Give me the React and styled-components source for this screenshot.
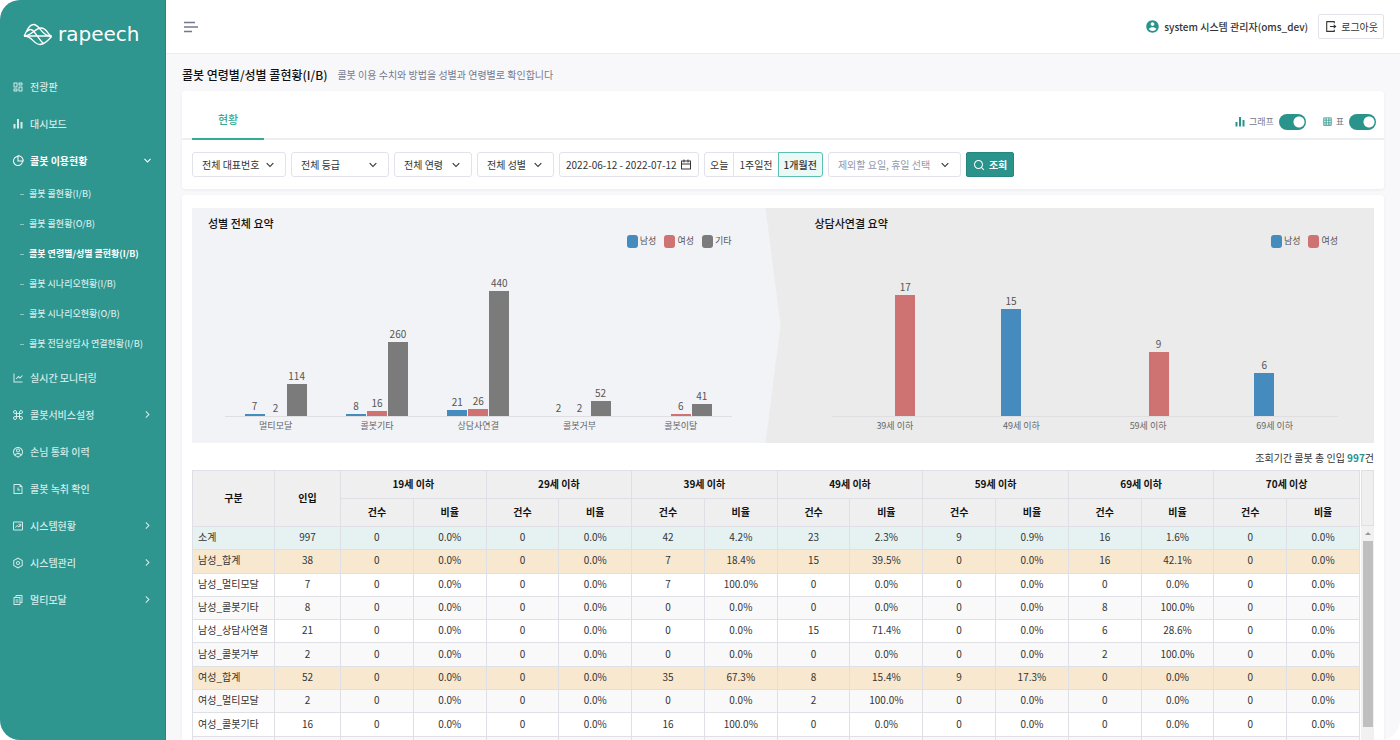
import { useState } from 'react';
import styled, { createGlobalStyle } from 'styled-components';
import {
  RiAccountCircleFill,
  RiAccountPinCircleLine,
  RiArrowDownSLine,
  RiArrowRightSLine,
  RiBarChartFill,
  RiCalendarLine,
  RiDashboardLine,
  RiFileCopy2Line,
  RiFileHistoryLine,
  RiGridLine,
  RiLineChartLine,
  RiLogoutBoxRLine,
  RiPieChart2Line,
  RiSearchLine,
  RiSettingsLine,
} from 'react-icons/ri';
import { LuCommand } from 'react-icons/lu';

const BLUE = '#468bbe';
const RED = '#cf7272';
const GRAY = '#7b7b7b';

const TrendBoxIcon = ({ size }) => (
  <svg width={size} height={size} viewBox="0 0 24 24" fill="none" stroke="currentColor" strokeWidth="2">
    <path d="M3 4h18v16H3ZM7 15l3-4 4 3 3-5M13 8.500h4.500V13" />
  </svg>
);

const subMenus = [
  { name: '콜봇 콜현황(I/B)' },
  { name: '콜봇 콜현황(O/B)' },
  { name: '콜봇 연령별/성별 콜현황(I/B)', active: true },
  { name: '콜봇 시나리오현황(I/B)' },
  { name: '콜봇 시나리오현황(O/B)' },
  { name: '콜봇 전담상담사 연결현황(I/B)' },
];

const menus = [
  { name: '전광판', Icon: RiDashboardLine },
  { name: '대시보드', Icon: RiBarChartFill },
  { name: '콜봇 이용현황', Icon: RiPieChart2Line, children: subMenus, active: true },
  { name: '실시간 모니터링', Icon: RiLineChartLine },
  { name: '콜봇서비스설정', Icon: LuCommand, more: true },
  { name: '손님 통화 이력', Icon: RiAccountPinCircleLine },
  { name: '콜봇 녹취 확인', Icon: RiFileHistoryLine },
  { name: '시스템현황', Icon: TrendBoxIcon, more: true },
  { name: '시스템관리', Icon: RiSettingsLine, more: true },
  { name: '멀티모달', Icon: RiFileCopy2Line, more: true },
];

const filters = [
  { label: '전체 대표번호', width: 94 },
  { label: '전체 등급', width: 98 },
  { label: '전체 연령', width: 78 },
  { label: '전체 성별', width: 77 },
];

const periods = ['오늘', '1주일전', '1개월전'];

const genderLegend = [
  { name: '남성', color: BLUE },
  { name: '여성', color: RED },
  { name: '기타', color: GRAY },
];

const genderChart = [
  { name: '멀티모달', values: [7, 2, 114] },
  { name: '콜봇기타', values: [8, 16, 260] },
  { name: '상담사연결', values: [21, 26, 440] },
  { name: '콜봇거부', values: [2, 2, 52] },
  { name: '콜봇이탈', values: [null, 6, 41] },
];

const agentChart = [
  { name: '39세 이하', values: [null, 17] },
  { name: '49세 이하', values: [15, null] },
  { name: '59세 이하', values: [null, 9] },
  { name: '69세 이하', values: [6, null] },
];

const ages = ['19세 이하', '29세 이하', '39세 이하', '49세 이하', '59세 이하', '69세 이하', '70세 이상'];

// cells: index of age group -> [count, ratio]
const rows = [
  { name: '소계', total: 997, kind: 'sum', cells: { 2: [42, '4.2%'], 3: [23, '2.3%'], 4: [9, '0.9%'], 5: [16, '1.6%'] } },
  { name: '남성_합계', total: 38, kind: 'group', cells: { 2: [7, '18.4%'], 3: [15, '39.5%'], 5: [16, '42.1%'] } },
  { name: '남성_멀티모달', total: 7, cells: { 2: [7, '100.0%'] } },
  { name: '남성_콜봇기타', total: 8, cells: { 5: [8, '100.0%'] } },
  { name: '남성_상담사연결', total: 21, cells: { 3: [15, '71.4%'], 5: [6, '28.6%'] } },
  { name: '남성_콜봇거부', total: 2, cells: { 5: [2, '100.0%'] } },
  { name: '여성_합계', total: 52, kind: 'group', cells: { 2: [35, '67.3%'], 3: [8, '15.4%'], 4: [9, '17.3%'] } },
  { name: '여성_멀티모달', total: 2, cells: { 3: [2, '100.0%'] } },
  { name: '여성_콜봇기타', total: 16, cells: { 2: [16, '100.0%'] } },
];

const BarChart = ({ title, legend, data, scale }) => (
  <>
    <ChartTitle>{title}</ChartTitle>
    <Legend>
      {legend.map(({ name, color }) => (
        <LegendItem key={name}>
          <Swatch color={color} />
          {name}
        </LegendItem>
      ))}
    </Legend>
    <Plot>
      {data.map(({ name, values }) => (
        <Group key={name}>
          {values.map((value, i) => (
            <BarSlot key={legend[i].name}>
              {value}
              <Bar color={legend[i].color} style={{ height: value * scale < 1 ? 0 : Math.round(value * scale) }} />
            </BarSlot>
          ))}
        </Group>
      ))}
    </Plot>
    <AxisLabels>
      {data.map(({ name }) => (
        <AxisLabel key={name}>{name}</AxisLabel>
      ))}
    </AxisLabels>
  </>
);

const Logo = () => (
  <LogoLink href="#home">
    <svg width="30" height="23" viewBox="0 0 30 23" fill="none" stroke="#fff" strokeWidth="1.3">
      <path d="M1 13C4 9 5 1.500 10.500 1.500 17 1.500 18 13 28.500 13.500" />
      <path d="M1 13c9 0 9 8.500 16 8.500 5 0 8-4 11.500-8" />
      <path d="M1 13C9 13 12 5 18 5c6 0 6 6 10.500 8.500" />
      <path d="M1 13h27.500M4 8.500C10 1 14 16 21 21" />
    </svg>
    <LogoText>rapeech</LogoText>
  </LogoLink>
);

const Sidebar = () => (
  <Side>
    <Logo />
    <Menu>
      {menus.map(({ name, Icon, active, more, children }) => (
        <li key={name}>
          <MenuLink href="#menu" $active={active}>
            <Icon size={12} />
            <MenuName>{name}</MenuName>
            {children && <RiArrowDownSLine size={13} />}
            {more && <RiArrowRightSLine size={13} />}
          </MenuLink>
          {children && (
            <SubMenu>
              {children.map(sub => (
                <li key={sub.name}>
                  <SubLink href="#menu" $active={sub.active}>
                    {sub.name}
                  </SubLink>
                </li>
              ))}
            </SubMenu>
          )}
        </li>
      ))}
    </Menu>
  </Side>
);

const Toggle = ({ icon, label, checked, onChange }) => (
  <ToggleLabel>
    {icon}
    {label}
    <Switch type="checkbox" role="switch" checked={checked} onChange={onChange} />
  </ToggleLabel>
);

const StatTable = () => (
  <TableArea>
    <TableBox>
      <Table>
        <colgroup>
          <NameCol />
          <TotalCol />
          {ages.map(age => (
            <col key={age} span={2} />
          ))}
        </colgroup>
        <thead>
          <tr>
            <Th rowSpan={2}>구분</Th>
            <Th rowSpan={2}>인입</Th>
            {ages.map(age => (
              <Th key={age} colSpan={2}>
                {age}
              </Th>
            ))}
          </tr>
          <tr>{ages.map(age => [<Th key={`${age}-count`}>건수</Th>, <Th key={`${age}-ratio`}>비율</Th>])}</tr>
        </thead>
        <tbody>
          {rows.map(({ name, total, kind, cells }) => (
            <Row key={name} $kind={kind}>
              <Td $left>{name}</Td>
              <Td>{total}</Td>
              {ages.map((age, i) => {
                const [count, ratio] = cells[i] || [0, '0.0%'];
                return [<Td key={`${age}-count`}>{count}</Td>, <Td key={`${age}-ratio`}>{ratio}</Td>];
              })}
            </Row>
          ))}
          <Row>
            <Td />
            <Td />
            {ages.map(age => [<Td key={`${age}-count`} />, <Td key={`${age}-ratio`} />])}
          </Row>
        </tbody>
      </Table>
    </TableBox>
    <ScrollColumn aria-hidden="true">
      <ScrollHead />
      <ScrollArrow />
      <ScrollThumb />
    </ScrollColumn>
  </TableArea>
);

const App = () => {
  const [period, setPeriod] = useState('1개월전');
  const [showGraph, setShowGraph] = useState(true);
  const [showTable, setShowTable] = useState(true);

  return (
    <>
      <GlobalStyle />
      <Shell>
        <Sidebar />
        <Main>
          <Header>
            <IconButton aria-label="메뉴">
              <svg width="14" height="12" viewBox="0 0 14 12" stroke="#74788d" strokeWidth="1.500">
                <path d="M0 1.500h11M0 6h14M0 10.500h8" />
              </svg>
            </IconButton>
            <User>
              <RiAccountCircleFill size={15} color="#2a938c" />
              system 시스템 관리자(oms_dev)
            </User>
            <LogoutButton>
              <RiLogoutBoxRLine size={13} />
              로그아웃
            </LogoutButton>
          </Header>
          <Content>
            <TitleRow>
              <PageTitle>콜봇 연령별/성별 콜현황(I/B)</PageTitle>
              <PageDesc>콜봇 이용 수치와 방법을 성별과 연령별로 확인합니다</PageDesc>
            </TitleRow>
            <Card>
              <TabBar>
                <Tab>현황</Tab>
                <Toggles>
                  <Toggle
                    icon={<RiBarChartFill size={12} color="#2a938c" />}
                    label="그래프"
                    checked={showGraph}
                    onChange={() => setShowGraph(!showGraph)}
                  />
                  <Toggle
                    icon={<RiGridLine size={11} color="#2a938c" />}
                    label="표"
                    checked={showTable}
                    onChange={() => setShowTable(!showTable)}
                  />
                </Toggles>
              </TabBar>
              <FilterBar>
                {filters.map(({ label, width }) => (
                  <SelectBox key={label} $width={width}>
                    <Select aria-label={label}>
                      <option>{label}</option>
                    </Select>
                    <RiArrowDownSLine size={14} />
                  </SelectBox>
                ))}
                <DateBox>
                  <DateInput aria-label="조회기간" defaultValue="2022-06-12 - 2022-07-12" />
                  <RiCalendarLine size={12} />
                </DateBox>
                <Periods>
                  {periods.map(name => (
                    <PeriodButton key={name} $active={name === period} onClick={() => setPeriod(name)}>
                      {name}
                    </PeriodButton>
                  ))}
                </Periods>
                <SelectBox $width={133} $muted>
                  <Select aria-label="제외할 요일, 휴일 선택">
                    <option>제외할 요일, 휴일 선택</option>
                  </Select>
                  <RiArrowDownSLine size={14} />
                </SelectBox>
                <SearchButton>
                  <RiSearchLine size={12} />
                  조회
                </SearchButton>
              </FilterBar>
            </Card>
            <ReportCard>
              {showGraph && (
                <Charts>
                  <GenderPanel>
                    <BarChart title="성별 전체 요약" legend={genderLegend} data={genderChart} scale={0.285} />
                  </GenderPanel>
                  <AgentPanel>
                    <BarChart
                      title="상담사연결 요약"
                      legend={genderLegend.slice(0, 2)}
                      data={agentChart}
                      scale={7.12}
                    />
                  </AgentPanel>
                </Charts>
              )}
              <Total>
                조회기간 콜봇 총 인입 <strong>997</strong>건
              </Total>
              {showTable && <StatTable />}
            </ReportCard>
          </Content>
        </Main>
      </Shell>
    </>
  );
};

const GlobalStyle = createGlobalStyle`
  * {
    box-sizing: border-box;
  }
  body {
    margin: 0;
    background: #fff;
    color: #343434;
    font-family: 'Noto Sans CJK KR', 'Noto Sans', sans-serif;
    font-size: 10px;
    line-height: 16px;
  }
  button, input, select {
    font: inherit;
    color: inherit;
  }
  ul {
    margin: 0;
    padding: 0;
    list-style: none;
  }
  a {
    color: inherit;
    text-decoration: none;
  }
  svg {
    flex: none;
  }
`;

const Shell = styled.div`
  display: flex;
  height: 100vh;
  overflow: hidden;
  border-radius: 20px;
  background: #f8f8fb;
`;

const Side = styled.aside`
  flex: none;
  width: 166px;
  background: #2e958f;
  border-right: 1px solid #23877f;
  color: #d3ebe9;
`;

const LogoLink = styled.a`
  display: flex;
  align-items: center;
  gap: 5px;
  height: 68px;
  padding-left: 23px;
  color: #fff;
`;

const LogoText = styled.span`
  font: 400 20px/24px 'DejaVu Sans', sans-serif;
`;

const Menu = styled.ul`
  font-size: 10px;
`;

const MenuLink = styled.a`
  display: flex;
  align-items: center;
  gap: 6px;
  height: 37px;
  padding: 0 11px 0 12px;
  color: ${({ $active }) => ($active ? '#fff' : 'inherit')};
  font-weight: ${({ $active }) => ($active ? 700 : 500)};
`;

const MenuName = styled.span`
  flex: 1;
`;

const SubMenu = styled.ul`
  font-size: 9px;
`;

const SubLink = styled.a`
  display: flex;
  align-items: center;
  gap: 5px;
  height: 30px;
  padding-left: 20px;
  white-space: nowrap;
  color: ${({ $active }) => ($active ? '#fff' : 'inherit')};
  font-weight: ${({ $active }) => ($active ? 700 : 500)};
  &::before {
    content: '';
    width: 4px;
    height: 1px;
    background: #8cc5c1;
  }
`;

const Main = styled.div`
  flex: 1;
  min-width: 0;
`;

const Header = styled.header`
  display: flex;
  align-items: center;
  height: 54px;
  padding: 0 16px 0 18px;
  background: #fff;
  border-bottom: 1px solid #ececee;
`;

const IconButton = styled.button`
  display: flex;
  padding: 0;
  border: 0;
  background: none;
`;

const User = styled.div`
  display: flex;
  align-items: center;
  gap: 4px;
  margin-left: auto;
  font-weight: 500;
`;

const LogoutButton = styled.button`
  display: flex;
  align-items: center;
  gap: 4px;
  height: 25px;
  margin-left: 10px;
  padding: 0 5px;
  border: 1px solid #e2e3ea;
  border-radius: 2px;
  background: #fff;
`;

const Content = styled.main`
  padding: 0 16px;
`;

const TitleRow = styled.div`
  display: flex;
  align-items: center;
  gap: 10px;
  height: 37px;
  padding-top: 4px;
`;

const PageTitle = styled.h1`
  margin: 0;
  font-size: 12px;
  font-weight: 500;
  color: #111;
`;

const PageDesc = styled.p`
  margin: 0;
  color: #74788d;
`;

const Card = styled.section`
  background: #fff;
  border-radius: 3px;
  box-shadow: 0 1px 3px rgba(18, 38, 63, 0.06);
`;

const TabBar = styled.div`
  display: flex;
  justify-content: space-between;
  height: 49px;
  padding: 0 8px 0 10px;
  box-shadow: inset 0 -2px #eeeef0;
`;

const Tab = styled.button`
  width: 72px;
  padding: 8px 0 0;
  border: 0;
  border-bottom: 2px solid #34ab95;
  background: none;
  color: #34ab95;
  font-size: 11px;
  font-weight: 500;
`;

const Toggles = styled.div`
  display: flex;
  align-items: center;
  gap: 16px;
  padding-top: 12px;
`;

const ToggleLabel = styled.label`
  display: flex;
  align-items: center;
  gap: 3px;
  font-size: 9px;
  color: #74788d;
`;

const Switch = styled.input`
  appearance: none;
  width: 27px;
  height: 16px;
  margin: 0 0 0 2px;
  border-radius: 8px;
  background: ${({ checked }) =>
    checked
      ? 'radial-gradient(circle at 20px 8px, #fff 5px, #2a938c 6px)'
      : 'radial-gradient(circle at 8px 8px, #fff 5px, #b5b7c0 6px)'};
`;

const FilterBar = styled.div`
  display: flex;
  gap: 5px;
  padding: 12px 10px;
`;

const SelectBox = styled.div`
  display: flex;
  align-items: center;
  width: ${({ $width }) => $width}px;
  height: 25px;
  padding-right: 8px;
  border: 1px solid #e2e3ea;
  border-radius: 3px;
  svg {
    margin-left: -14px;
    pointer-events: none;
  }
  select {
    color: ${({ $muted }) => ($muted ? '#9497ab' : 'inherit')};
  }
`;

const Select = styled.select`
  appearance: none;
  flex: 1;
  min-width: 0;
  height: 100%;
  padding: 0 0 0 9px;
  border: 0;
  background: none;
`;

const DateBox = styled.div`
  display: flex;
  align-items: center;
  gap: 2px;
  width: 140px;
  height: 25px;
  padding: 0 6px;
  border: 1px solid #e2e3ea;
  border-radius: 3px;
`;

const DateInput = styled.input`
  flex: 1;
  min-width: 0;
  padding: 0;
  border: 0;
  background: none;
`;

const Periods = styled.div`
  display: flex;
`;

const PeriodButton = styled.button`
  height: 25px;
  padding: 0 5px;
  border: 1px solid ${({ $active }) => ($active ? '#5bc0b0' : '#e2e3ea')};
  background: ${({ $active }) => ($active ? '#eaf8f6' : '#fff')};
  font-weight: ${({ $active }) => ($active ? 500 : 400)};
  & + & {
    margin-left: -1px;
  }
  &:first-child {
    border-radius: 3px 0 0 3px;
  }
  &:last-child {
    border-radius: 0 3px 3px 0;
  }
`;

const SearchButton = styled.button`
  display: flex;
  align-items: center;
  gap: 4px;
  height: 25px;
  padding: 0 6px;
  border: 1px solid #23877f;
  border-radius: 2px;
  background: #2a938c;
  color: #fff;
  font-weight: 700;
`;

const ReportCard = styled(Card)`
  margin-top: 6px;
  padding: 13px 10px;
`;

const Charts = styled.div`
  display: flex;
  background: #ebebeb;
`;

const ChartPanel = styled.section`
  flex: 1;
  min-width: 0;
  height: 235px;
`;

const GenderPanel = styled(ChartPanel)`
  padding: 7px 51px 0 33px;
  background: #f2f3f6;
  clip-path: polygon(0 0, calc(100% - 17px) 0, calc(100% - 2px) 50%, calc(100% - 17px) 100%, 0 100%);
`;

const AgentPanel = styled(ChartPanel)`
  padding: 7px 36px 0 49px;
`;

const ChartTitle = styled.h2`
  margin: 0 0 0 -17px;
  font-size: 11px;
  font-weight: 500;
  line-height: 16px;
  color: #111;
`;

const Legend = styled.div`
  display: flex;
  justify-content: flex-end;
  gap: 8px;
  margin-top: 2px;
  font-size: 9px;
  color: #555;
`;

const LegendItem = styled.span`
  display: flex;
  align-items: center;
  gap: 2px;
`;

const Swatch = styled.i`
  width: 11px;
  height: 13px;
  border-radius: 3px;
  background: ${({ color }) => color};
`;

const Plot = styled.div`
  display: flex;
  height: 168px;
  border-bottom: 1px solid #dfdfe1;
`;

const Group = styled.div`
  flex: 1;
  display: flex;
  justify-content: center;
  align-items: flex-end;
  gap: 1px;
`;

const BarSlot = styled.div`
  width: 20px;
  text-align: center;
  color: #555;
`;

const Bar = styled.div`
  background: ${({ color }) => color};
`;

const AxisLabels = styled.div`
  display: flex;
  padding-top: 1px;
`;

const AxisLabel = styled.span`
  flex: 1;
  text-align: center;
  font-size: 9px;
  color: #666;
`;

const Total = styled.p`
  margin: 0;
  padding: 7px 0 4px;
  text-align: right;
  strong {
    color: #2a938c;
    font-weight: 700;
  }
`;

const TableArea = styled.div`
  display: flex;
  gap: 1px;
`;

const TableBox = styled.div`
  flex: 1;
  min-width: 0;
`;

const Table = styled.table`
  width: 100%;
  height: 290px;
  table-layout: fixed;
  border-collapse: collapse;
`;

const NameCol = styled.col`
  width: 82px;
`;

const TotalCol = styled.col`
  width: 66px;
`;

const Th = styled.th`
  height: 28px;
  padding: 0 0 1px;
  border: 1px solid #dfdfe6;
  background: #efefef;
  color: #111;
  font-weight: 700;
`;

const rowColor = {
  sum: '#e5f2f1',
  group: '#f7e8cf',
};

const Row = styled.tr`
  background: ${({ $kind }) => rowColor[$kind] || '#fff'};
  &:nth-child(even) {
    background: ${({ $kind }) => rowColor[$kind] || '#f9f9f9'};
  }
`;

// the cell's own padding keeps an empty row as tall as a filled one
const Td = styled.td`
  padding: 0 5px 2px;
  border: 1px solid #dfdfe6;
  text-align: ${({ $left }) => ($left ? 'left' : 'center')};
  white-space: nowrap;
  &:empty {
    padding: 8px 5px 10px;
  }
`;

const ScrollColumn = styled.div`
  display: flex;
  flex-direction: column;
  align-items: center;
  width: 13px;
  background: #f1f1f1;
`;

const ScrollHead = styled.div`
  width: 100%;
  height: 56px;
  border: 1px solid #dfdfe6;
  background: #efefef;
`;

const ScrollArrow = styled.div`
  margin: 6px 0;
  border: 3px solid transparent;
  border-top: 0;
  border-bottom: 3px solid #999;
`;

const ScrollThumb = styled.div`
  width: 10px;
  height: 186px;
  background: #bfbfbf;
`;

export default App;
